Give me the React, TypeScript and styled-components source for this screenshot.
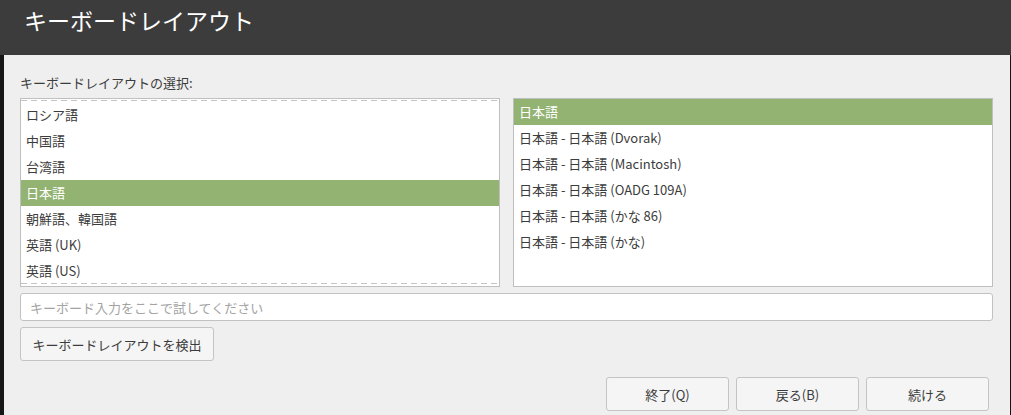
import React from "react";
import styled, { createGlobalStyle } from "styled-components";

const Global = createGlobalStyle`
  html, body { margin: 0; padding: 0; background: #efefef; }
  body { font-family: "Noto Sans CJK JP", "Noto Sans", sans-serif; overflow: hidden; }
  * { box-sizing: border-box; }
`;

const Page = styled.div`
  width: 1011px;
  height: 415px;
  display: flex;
  flex-direction: column;
  background: #efefef;
`;

const Header = styled.header`
  height: 55px;
  flex: none;
  background: #3c3c3c;
  color: #ffffff;
  display: flex;
  align-items: flex-start;
  padding: 4px 0 0 24px;
  font-size: 23px;
  line-height: 32px;
`;

const Body = styled.div`
  flex: 1;
  display: flex;
  min-height: 0;
`;

const EdgeLeft = styled.div`
  width: 4px;
  flex: none;
  background: #161616;
`;

const EdgeRight = styled.div`
  width: 1px;
  flex: none;
  background: #161616;
`;

const Content = styled.main`
  flex: 1;
  display: flex;
  flex-direction: column;
  padding: 19px 17px 0 16px;
  color: #3c3c3c;
  font-size: 13px;
`;

const Label = styled.div`
  line-height: 18px;
  margin-bottom: 6px;
`;

const Lists = styled.div`
  display: grid;
  grid-template-columns: 1fr 1fr;
  gap: 13px;
  height: 189px;
`;

const ListBox = styled.div<{ $scroll?: boolean }>`
  position: relative;
  background: #ffffff;
  border: 1px solid #bfbfbf;
  overflow: hidden;
  padding-top: ${(p) => (p.$scroll ? "3px" : "0")};
  ${(p) =>
    p.$scroll &&
    `
    &::before, &::after {
      content: "";
      position: absolute;
      left: 0;
      right: 0;
      height: 1px;
      background-image: repeating-linear-gradient(to right, #c4c4c4 0 6px, transparent 6px 10px);
    }
    &::before { top: 1px; }
    &::after { bottom: 2px; }
  `}
`;

const Row = styled.div<{ $selected?: boolean }>`
  height: 26px;
  line-height: 26px;
  padding-left: 5px;
  white-space: nowrap;
  background: ${(p) => (p.$selected ? "#93b373" : "transparent")};
  color: ${(p) => (p.$selected ? "#ffffff" : "#3c3c3c")};
`;

const Input = styled.input`
  margin-top: 6px;
  height: 28px;
  width: 100%;
  border: 1px solid #c2c2c2;
  border-radius: 3px;
  background: #ffffff;
  padding: 0 9px;
  font-family: inherit;
  font-size: 13px;
  color: #3c3c3c;
  outline: none;
  &::placeholder { color: #a3a3a3; }
`;

const Button = styled.button<{ $width: number }>`
  width: ${(p) => p.$width}px;
  height: 34px;
  border: 1px solid #c4c4c4;
  border-radius: 3px;
  background: #f5f5f5;
  font-family: inherit;
  font-size: 13px;
  color: #3c3c3c;
  padding: 0;
`;

const DetectRow = styled.div`
  margin-top: 6px;
  display: flex;
`;

const Footer = styled.div`
  margin-top: 16px;
  display: flex;
  justify-content: flex-end;
  gap: 7px;
  padding-right: 4px;
`;

const leftItems = ["ロシア語", "中国語", "台湾語", "日本語", "朝鮮語、韓国語", "英語 (UK)", "英語 (US)"];
const rightItems = [
  "日本語",
  "日本語 - 日本語 (Dvorak)",
  "日本語 - 日本語 (Macintosh)",
  "日本語 - 日本語 (OADG 109A)",
  "日本語 - 日本語 (かな 86)",
  "日本語 - 日本語 (かな)",
];

export default function App() {
  return (
    <Page>
      <Global />
      <Header>キーボードレイアウト</Header>
      <Body>
        <EdgeLeft />
        <Content>
          <Label>キーボードレイアウトの選択:</Label>
          <Lists>
            <ListBox $scroll>
              {leftItems.map((t) => (
                <Row key={t} $selected={t === "日本語"}>
                  {t}
                </Row>
              ))}
            </ListBox>
            <ListBox>
              {rightItems.map((t, i) => (
                <Row key={t} $selected={i === 0}>
                  {t}
                </Row>
              ))}
            </ListBox>
          </Lists>
          <Input placeholder="キーボード入力をここで試してください" />
          <DetectRow>
            <Button $width={194}>キーボードレイアウトを検出</Button>
          </DetectRow>
          <Footer>
            <Button $width={123}>終了(Q)</Button>
            <Button $width={123}>戻る(B)</Button>
            <Button $width={123}>続ける</Button>
          </Footer>
        </Content>
        <EdgeRight />
      </Body>
    </Page>
  );
}
